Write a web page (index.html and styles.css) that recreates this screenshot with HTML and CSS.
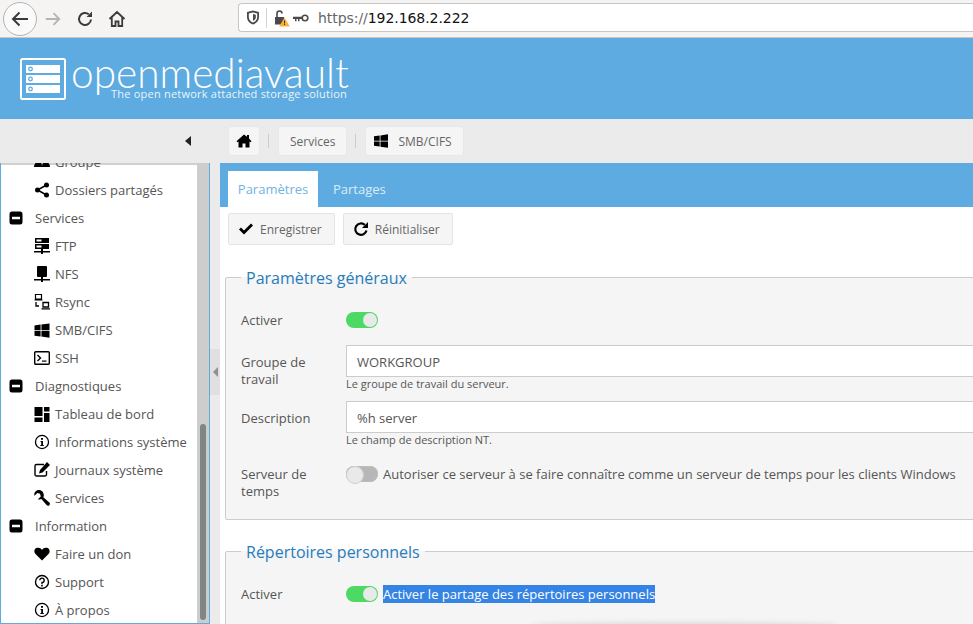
FILE: index.html
```html
<!DOCTYPE html>
<html lang="fr">
<head>
<meta charset="utf-8">
<title>openmediavault</title>
<link rel="stylesheet" href="styles.css">
</head>
<body>
<svg class="defs" width="0" height="0">
  <symbol id="i-home" viewBox="0 0 16 16"><path d="M8 1.500 0.500 8.200l1 1.100 1-.9V14.500h4v-4h3v4h4V8.400l1 .9 1-1.100L13 5.500V2h-2v1.700z"/></symbol>
  <symbol id="i-win" viewBox="0 0 16 16"><path d="M0 2.600 6.500 1.700V7.600H0zM7.400 1.600 16 .4V7.600H7.400zM0 8.500H6.500V14.400L0 13.500zM7.400 8.500H16V15.700L7.400 14.500z"/></symbol>
  <symbol id="i-minus" viewBox="0 0 14 14"><path fill-rule="evenodd" d="M3 .5h8A2.500 2.500 0 0 1 13.500 3v8A2.500 2.500 0 0 1 11 13.500H3A2.500 2.500 0 0 1 .5 11V3A2.500 2.500 0 0 1 3 .5zM3 5.800v2.400h8V5.800z"/></symbol>
  <symbol id="i-info" viewBox="0 0 16 16"><path fill-rule="evenodd" d="M8 .8a7.200 7.200 0 1 1 0 14.400A7.200 7.200 0 0 1 8 .8zm0 1.300a5.900 5.900 0 1 0 0 11.800A5.900 5.900 0 0 0 8 2.100zM7 4h2v1.800H7zM6.500 7H9v4h.8v1.100H6.300V11h.9V8.100h-.7z"/></symbol>
</svg>

<header class="chrome">
  <button class="nav-back" type="button" aria-label="Retour">
    <svg width="20" height="20" viewBox="0 0 20 20"><path d="M18 10H3M9.500 3.500 3 10l6.500 6.500" fill="none" stroke="#3b3b3b" stroke-width="2"/></svg>
  </button>
  <svg class="nav-fwd" width="18" height="18" viewBox="0 0 20 20"><path d="M2 10h15M10.500 3.500 17 10l-6.500 6.500" fill="none" stroke="#b4b4b4" stroke-width="2"/></svg>
  <svg class="nav-reload" width="18" height="18" viewBox="0 0 18 18"><path d="M15 9.500A6 6 0 1 1 12.800 4.300" fill="none" stroke="#3b3b3b" stroke-width="2"/><path d="M16 1.500V7h-5.500z" fill="#3b3b3b"/></svg>
  <svg class="nav-home" width="18" height="18" viewBox="0 0 18 18"><path d="M1.500 9 9 2l7.500 7M3.800 7.500V16h3.700v-4.500h3V16h3.700V7.500" fill="none" stroke="#3b3b3b" stroke-width="1.800"/></svg>
  <div class="urlbar">
    <svg class="shield" width="14" height="15" viewBox="0 0 14 15"><path fill-rule="evenodd" d="M7 .5 13 2v5c0 4-3 6.500-6 7.500C4 13.500 1 11 1 7V2zM7 2.400 2.800 3.400V7c0 2.800 2 4.800 4.200 5.600 2.200-.8 4.200-2.800 4.200-5.600V3.400z" fill="#4a4a4a"/><path d="M7 4 9.800 4.700V7.200c0 1.700-1.300 2.900-2.800 3.500z" fill="#4a4a4a"/></svg>
    <span class="url-sep"></span>
    <svg class="lock" width="16" height="18" viewBox="0 0 16 18"><path d="M1 8h9v7.500H1z" fill="#4a4a4a"/><path d="M3 8V4.500a2.500 2.500 0 0 1 5 0" fill="none" stroke="#4a4a4a" stroke-width="1.600"/><path d="M10.500 8.500 15.800 17.500H5.200z" fill="#fbb03b"/><path d="M10 11.500h1v3h-1zM10 15h1v1h-1z" fill="#333"/></svg>
    <svg class="key" width="16" height="10" viewBox="0 0 16 10"><circle cx="12" cy="5" r="2.800" fill="none" stroke="#4a4a4a" stroke-width="1.600"/><path d="M0 3.800h9v2.200H6.500v2.200H5V6H3.500v2.200H2V6H0z" fill="#4a4a4a"/></svg>
    <span class="url"><span class="url-scheme">https://</span>192.168.2.222</span>
  </div>
</header>

<div class="brand">
  <svg class="brand-logo" width="46" height="42" viewBox="0 0 46 42"><rect x="1" y="1" width="44" height="40" rx="1.500" fill="none" stroke="#fff" stroke-width="2"/><g fill="#fff"><rect x="6" y="7" width="34" height="8"/><rect x="6" y="17" width="34" height="8"/><rect x="6" y="27" width="34" height="8"/></g><g fill="none" stroke="#5dabe0" stroke-width="1.300"><circle cx="10.500" cy="11" r="1.800"/><circle cx="10.500" cy="21" r="1.800"/><circle cx="10.500" cy="31" r="1.800"/></g></svg>
  <div class="brand-text">
    <div class="brand-name">openmediavault</div>
    <div class="brand-tag">The open network attached storage solution</div>
  </div>
</div>

<div class="toolbar">
  <div class="toolbar-left"><span class="caret-left"></span></div>
  <nav class="crumbs">
    <a class="crumb crumb-home"><svg width="16" height="16"><use href="#i-home"/></svg></a>
    <span class="crumb-sep"></span>
    <a class="crumb">Services</a>
    <span class="crumb-sep"></span>
    <a class="crumb crumb-icon"><svg width="14" height="14"><use href="#i-win"/></svg>SMB/CIFS</a>
  </nav>
</div>

<div class="workspace">
  <aside class="sidebar">
    <div class="tree">
      <div class="row leaf"><svg class="ic" width="16" height="16" viewBox="0 0 16 16"><circle cx="4.500" cy="4" r="2.500"/><circle cx="11.500" cy="4" r="2.500"/><path d="M0 13c0-3 2-5 4.500-5S8 9 8 13zM8 13c0-3 1-5 3.500-5S16 10 16 13z"/></svg><span>Groupe</span></div>
      <div class="row leaf"><svg class="ic" width="16" height="16" viewBox="0 0 16 16"><path d="M12.500 3 3.500 8l9 5" fill="none" stroke="#000" stroke-width="1.500"/><circle cx="12.500" cy="3" r="2.500"/><circle cx="3.500" cy="8" r="2.500"/><circle cx="12.500" cy="13" r="2.500"/></svg><span>Dossiers partagés</span></div>
      <div class="row group"><svg class="ic-group" width="14" height="14"><use href="#i-minus"/></svg><span>Services</span></div>
      <div class="row leaf"><svg class="ic" width="16" height="16" viewBox="0 0 16 16"><path fill-rule="evenodd" d="M1 0h14v5H1zM1 6h14v5H1zM2.500 1.500v2h5v-2zM2.500 7.500v2h5v-2z"/><path d="M7 11h2v2h7v1.500H9V16H7v-1.500H0V13h7z"/></svg><span>FTP</span></div>
      <div class="row leaf"><svg class="ic" width="16" height="16" viewBox="0 0 16 16"><path d="M4 0h8a1 1 0 0 1 1 1v9a1 1 0 0 1-1 1H9v2h7v1.500H9V16H7v-1.500H0V13h7v-2H4a1 1 0 0 1-1-1V1a1 1 0 0 1 1-1z"/></svg><span>NFS</span></div>
      <div class="row leaf"><svg class="ic" width="16" height="16" viewBox="0 0 16 16"><path d="M1.500.5h6v4.500h-6zM.5 6h8" fill="none" stroke="#000" stroke-width="1.200"/><path d="M2 8v4h3M9 8.500h5.500V13H9zM7.500 14.800h8.500" fill="none" stroke="#000" stroke-width="1.300"/></svg><span>Rsync</span></div>
      <div class="row leaf"><svg class="ic" width="15" height="15"><use href="#i-win"/></svg><span>SMB/CIFS</span></div>
      <div class="row leaf"><svg class="ic" width="16" height="16" viewBox="0 0 16 16"><rect x=".7" y="1.700" width="14.600" height="12.600" rx="1" fill="none" stroke="#000" stroke-width="1.400"/><path d="M3.500 5 6.500 8l-3 3" fill="none" stroke="#000" stroke-width="1.400"/><path d="M8 10.500h4.500v1.200H8z"/></svg><span>SSH</span></div>
      <div class="row group"><svg class="ic-group" width="14" height="14"><use href="#i-minus"/></svg><span>Diagnostiques</span></div>
      <div class="row leaf"><svg class="ic" width="15" height="15" viewBox="0 0 15 15"><path d="M0 0h8v9H0zM9.500 0H15v4.500H9.500zM9.500 6H15v9H9.500zM0 10.500h8V15H0z"/></svg><span>Tableau de bord</span></div>
      <div class="row leaf"><svg class="ic" width="16" height="16"><use href="#i-info"/></svg><span>Informations système</span></div>
      <div class="row leaf"><svg class="ic" width="16" height="16" viewBox="0 0 16 16"><path d="M10 2.500H2.500A1.500 1.500 0 0 0 1 4v8.500A1.500 1.500 0 0 0 2.500 14H11a1.500 1.500 0 0 0 1.500-1.500V9" fill="none" stroke="#000" stroke-width="1.400"/><path d="M13 0l3 3-7.500 7.500L5 11.500l1-3.500z"/></svg><span>Journaux système</span></div>
      <div class="row leaf"><svg class="ic" width="16" height="16" viewBox="0 0 16 16"><path d="M5 0C2.500 0 .3 2 .3 4.500c0 .5 0 .9.200 1.300L3.300 3l2.700.8.800 2.700-2.900 2.800c.5.200 1 .3 1.500.3.700 0 1.400-.2 2-.5l5.200 6c.8.900 2 .9 2.700.1.800-.8.800-2 0-2.700L9.300 7.300c.3-.6.500-1.200.5-1.900C9.800 2.300 7.700 0 5 0z"/></svg><span>Services</span></div>
      <div class="row group"><svg class="ic-group" width="14" height="14"><use href="#i-minus"/></svg><span>Information</span></div>
      <div class="row leaf"><svg class="ic" width="16" height="16" viewBox="0 0 16 16"><path d="M8 14.500 1.500 8C-.5 5.800.2 2.500 3 1.800 5 1.300 7 2.200 8 4c1-1.800 3-2.700 5-2.200 2.800.7 3.500 4 1.500 6.200z"/></svg><span>Faire un don</span></div>
      <div class="row leaf"><svg class="ic" width="16" height="16" viewBox="0 0 16 16"><circle cx="8" cy="8" r="6.500" fill="none" stroke="#000" stroke-width="1.400"/><path d="M5.800 6.300A2.200 2.200 0 1 1 8 8.500V10" fill="none" stroke="#000" stroke-width="1.400"/><path d="M7.200 10.800h1.600v1.600H7.200z"/></svg><span>Support</span></div>
      <div class="row leaf"><svg class="ic" width="16" height="16"><use href="#i-info"/></svg><span>À propos</span></div>
    </div>
    <div class="scrolltrack"><div class="scrollthumb"></div></div>
  </aside>

  <div class="splitter"><div class="splitter-handle"><span class="caret-small"></span></div></div>

  <main class="content">
    <div class="tabs">
      <a class="tab tab-active">Paramètres</a>
      <a class="tab">Partages</a>
    </div>
    <div class="actions">
      <button class="btn" type="button"><svg width="16" height="16" viewBox="0 0 16 16"><path d="M1 8.500 3 6.500l3 3 7-7 2 2-9 9z"/></svg>Enregistrer</button>
      <button class="btn" type="button"><svg width="16" height="16" viewBox="0 0 16 16"><path d="M13.500 9.500A5.700 5.700 0 1 1 11.800 3.900" fill="none" stroke="#000" stroke-width="2.200"/><path d="M15 1v6H9z"/></svg>Réinitialiser</button>
    </div>

    <fieldset class="panel panel-general">
      <legend>Paramètres généraux</legend>
      <div class="field field-toggle">
        <label>Activer</label>
        <div class="control"><span class="toggle toggle-on"></span></div>
      </div>
      <div class="field field-input">
        <label>Groupe de travail</label>
        <div class="control">
          <div class="input">WORKGROUP</div>
          <div class="hint">Le groupe de travail du serveur.</div>
        </div>
      </div>
      <div class="field field-input">
        <label>Description</label>
        <div class="control">
          <div class="input">%h server</div>
          <div class="hint">Le champ de description NT.</div>
        </div>
      </div>
      <div class="field field-time">
        <label>Serveur de temps</label>
        <div class="control control-inline"><span class="toggle"></span><span>Autoriser ce serveur à se faire connaître comme un serveur de temps pour les clients Windows</span></div>
      </div>
    </fieldset>

    <fieldset class="panel panel-home">
      <legend>Répertoires personnels</legend>
      <div class="field field-toggle">
        <label>Activer</label>
        <div class="control control-inline"><span class="toggle toggle-on"></span><span class="selected">Activer le partage des répertoires personnels</span></div>
      </div>
    </fieldset>
  </main>
</div>
<div class="bottom-shade"></div>
</body>
</html>
```

FILE: styles.css
```css
* { box-sizing: border-box; }
html, body { margin: 0; height: 624px; overflow: hidden; }
body { font-family: "Open Sans", sans-serif; font-size: 13px; color: #555; background: #fff; width: 973px; position: relative; }
.defs { position: absolute; }

.chrome { height: 38px; background: #f5f4f3; border-bottom: 1px solid #c9c7c4; display: flex; align-items: center; }
.nav-back { width: 34px; height: 34px; margin-left: 3px; padding: 0; border: 1px solid #b5b3b1; border-radius: 50%; background: #fbfafa; display: flex; align-items: center; justify-content: center; }
.nav-fwd { margin-left: 7px; }
.nav-reload { margin-left: 14px; }
.nav-home { margin-left: 14px; }
.urlbar { margin-left: 112px; flex: 1; height: 29px; margin-top: -2px; background: #fff; border: 1px solid #c8c6c3; border-right: 0; border-radius: 4px 0 0 4px; display: flex; align-items: center; padding-left: 7px; font-family: "DejaVu Sans", sans-serif; font-size: 14px; color: #111; }
.url-sep { width: 1px; height: 20px; background: #d5d3d0; margin: 0 7px 0 6px; }
.key { margin-left: 3px; }
.url { margin-left: 9px; letter-spacing: -.06px; }
.url-scheme { color: #666; }

.brand { height: 81px; background: #5dabe0; padding: 21px 0 0 20px; display: flex; align-items: flex-start; color: #fff; }
.brand-logo { flex: none; margin-top: -1px; width: 46px; height: 42px; }
.brand-text { margin-left: 5px; position: relative; }
.brand-name { font-family: "Lato", sans-serif; font-weight: 300; font-size: 40.600px; line-height: 36px; margin-top: -4px; white-space: nowrap; }
.brand-tag { position: absolute; left: 40px; top: 28px; font-size: 11px; line-height: 14px; white-space: nowrap; color: #e9f4fb; letter-spacing: .22px; }

.toolbar { height: 44px; background: #ebebeb; display: flex; align-items: flex-start; }
.toolbar-left { width: 228px; height: 44px; position: relative; display: flex; align-items: center; }
.caret-left { margin-left: 185px; width: 0; height: 0; border: 5px solid transparent; border-left: 0; border-right: 6px solid #222; }
.crumbs { display: flex; align-items: center; height: 30px; margin-top: 7px; }
.crumb { height: 30px; padding: 0 11px; background: #f5f5f5; border-radius: 3px; border: 1px solid #e8e8e8; display: flex; align-items: center; gap: 8px; color: #666; font-size: 12px; }
.crumb-home { background: #f5f5f5; width: 32px; justify-content: center; padding: 0; }
.crumb-icon { padding-left: 8px; gap: 10px; }
.crumb-sep { width: 1px; height: 14px; background: #ccc; margin: 0 9px 0 8px; }

.workspace { height: 461px; display: flex; }
.sidebar { width: 210px; height: 461px; background: #fff; border: 1px solid #5dabe0; border-top: 0; display: flex; overflow: hidden; flex: none; box-shadow: inset 0 2px 0 #d0d0d0; }
.tree { flex: 1; margin-top: -15px; min-width: 0; }
.row { height: 28px; display: flex; align-items: center; white-space: nowrap; color: #555; }
.leaf { padding-left: 33px; }
.leaf span { margin-left: 5px; }
.ic { width: 16px; flex: none; }
.group { padding-left: 8px; }
.group span { margin-left: 12px; }
.ic-group { flex: none; }
.scrolltrack { width: 12px; background: #cdcdcd; flex: none; padding: 261px 3px 3px; }
.scrollthumb { height: 196px; background: #7f8686; border-radius: 3px; }

.splitter { width: 10px; flex: none; background: #ebebeb; padding-top: 186px; }
.splitter-handle { height: 46px; background: #e0e0e0; display: flex; align-items: center; justify-content: center; }
.caret-small { width: 0; height: 0; border: 5px solid transparent; border-left: 0; border-right: 5px solid #909090; }

.content { flex: none; width: 820px; background: #fff; position: relative; }
.tabs { height: 44px; background: #5dabe0; display: flex; padding: 8px 0 0 8px; }
.tab { height: 36px; padding: 0 15px; display: flex; align-items: center; color: #dcebf7; }
.tab-active { background: #fff; color: #6fb3e3; padding: 0 10px; width: 90px; justify-content: center; }

.actions { display: flex; gap: 8px; padding: 6px 0 0 8px; height: 43px; }
.btn { height: 32px; padding: 0 12px 0 9px; background: #f5f5f5; border: 1px solid #e4e4e4; border-radius: 2px; display: flex; align-items: center; gap: 6px; font: 12px "Open Sans", sans-serif; color: #666; }

.panel { margin: 0 0 0 5px; width: 810px; background: #f5f5f5; border: 1px solid #ccc; border-radius: 2px; padding: 0; min-width: 0; }
.panel-general { margin-top: 15px; height: 255px; }
.panel-home { margin-top: 19px; height: 91px; }
.panel legend { margin-left: 15px; padding: 2px 5px 0; font-size: 16px; line-height: 22px; color: #277cbb; background: transparent; }
.field { display: flex; padding-left: 15px; }
.field label { width: 105px; flex: none; line-height: 17px; padding-right: 25px; }
.field-toggle { height: 32px; margin-top: 15px; align-items: center; }
.field-input { height: 56px; }
.field-toggle + .field-input { margin-top: 9px; }
.field-input label { padding-top: 9px; }
.control { flex: 1; min-width: 0; }
.input { height: 32px; width: 640px; background: #fff; border: 1px solid #ccc; padding: 1px 0 0 10px; display: flex; align-items: center; color: #555; }
.hint { font-size: 11px; line-height: 14px; margin-top: 0; color: #555; }
.field-time { margin-top: 8px; }
.field-time label { padding-top: 1px; }
.control-inline { display: flex; align-items: center; gap: 5px; height: 18px; }
.toggle { display: block; width: 32px; height: 16px; border-radius: 8px; background: #b7b7b7; position: relative; flex: none; box-shadow: inset 0 0 0 1px #bdbdbd; }
.toggle::after { content: ""; position: absolute; left: 0; top: 0; width: 16px; height: 16px; border-radius: 50%; background: #e9e9e9; border: 1px solid #cfcfcf; }
.toggle-on { background: #4cd964; box-shadow: none; }
.toggle-on::after { left: 17px; top: 1px; width: 14px; height: 14px; border: 0; }
.selected { background: #3584e4; color: #fff; line-height: 18px; white-space: nowrap; }
.bottom-shade { position: absolute; left: 530px; top: 622px; width: 310px; height: 6px; background: #dcdcdc; filter: blur(2px); border-radius: 50%; }
```
